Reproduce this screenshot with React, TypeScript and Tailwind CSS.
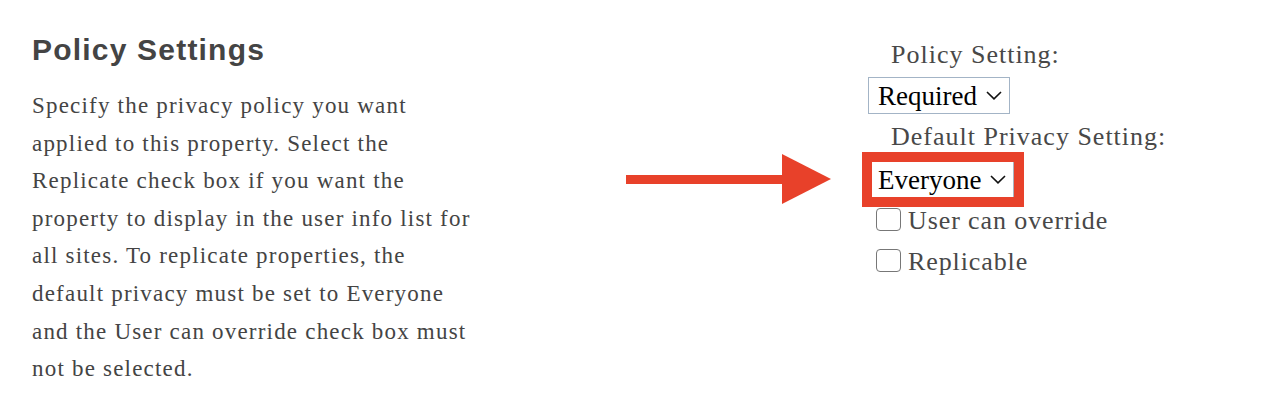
import React from "react";

const serif = { fontFamily: '"Liberation Serif", "Times New Roman", serif' };

function Chevron() {
  return (
    <svg width="16" height="9" viewBox="0 0 16 9" className="ml-[9px]">
      <polyline points="1,1 8,7.8 15,1" fill="none" stroke="#111" strokeWidth="1.6" />
    </svg>
  );
}

function Checkbox({ label }: { label: string }) {
  return (
    <div className="flex items-center h-[24px] ml-[14px]">
      <div className="w-[25px] h-[23px] border-[1.5px] border-[#777] rounded-[4px] bg-white" />
      <span className="ml-[7px] mt-[3px] text-[26px] leading-[24px] tracking-[0.9px] text-[#484848]">{label}</span>
    </div>
  );
}

export default function App() {
  const lines = [
    "Specify the privacy policy you want",
    "applied to this property. Select the",
    "Replicate check box if you want the",
    "property to display in the user info list for",
    "all sites. To replicate properties, the",
    "default privacy must be set to Everyone",
    "and the User can override check box must",
    "not be selected.",
  ];
  return (
    <div className="w-[1276px] h-[410px] bg-white flex pl-[32px] overflow-hidden" style={serif}>
      <div className="w-[594px] pt-[33px]">
        <h2
          className="text-[30px] leading-[34px] font-bold text-[#444] tracking-[1.2px] whitespace-nowrap"
          style={{ fontFamily: '"Liberation Sans", Arial, sans-serif' }}
        >
          Policy Settings
        </h2>
        <div className="mt-[20px] text-[23px] leading-[37.6px] tracking-[1.2px] text-[#444] whitespace-nowrap">
          {lines.map((l) => (
            <div key={l}>{l}</div>
          ))}
        </div>
      </div>
      <div className="pt-[154px] w-[236px]">
        <svg width="206" height="50" viewBox="0 0 206 50">
          <rect x="0" y="21" width="157" height="9" fill="#e8412a" />
          <polygon points="156,0 205,25 156,50" fill="#e8412a" />
        </svg>
      </div>
      <div className="pt-[40px] flex flex-col items-start">
        <div className="pl-[29px] text-[26px] leading-[30px] tracking-[1px] text-[#484848] whitespace-nowrap">
          Policy Setting:
        </div>
        <div className="mt-[7px] ml-[6px] w-[142px] h-[37px] border-[1.5px] border-[#a3b4c6] flex items-center pl-[9px] bg-white">
          <span className="text-[27px] leading-[30px] text-black">Required</span>
          <Chevron />
        </div>
        <div className="mt-[8px] pl-[29px] text-[26px] leading-[30px] tracking-[1px] text-[#484848] whitespace-nowrap">
          Default Privacy Setting:
        </div>
        <div className="w-[162px] h-[55px] border-[10px] border-[#e8412a]">
          <div className="w-full h-full bg-white border-r-[1.5px] border-[#a9b4c0] flex items-center pl-[6px]">
            <span className="text-[27px] leading-[30px] text-black">Everyone</span>
            <Chevron />
          </div>
        </div>
        <Checkbox label="User can override" />
        <div className="mt-[17px]">
          <Checkbox label="Replicable" />
        </div>
      </div>
    </div>
  );
}
